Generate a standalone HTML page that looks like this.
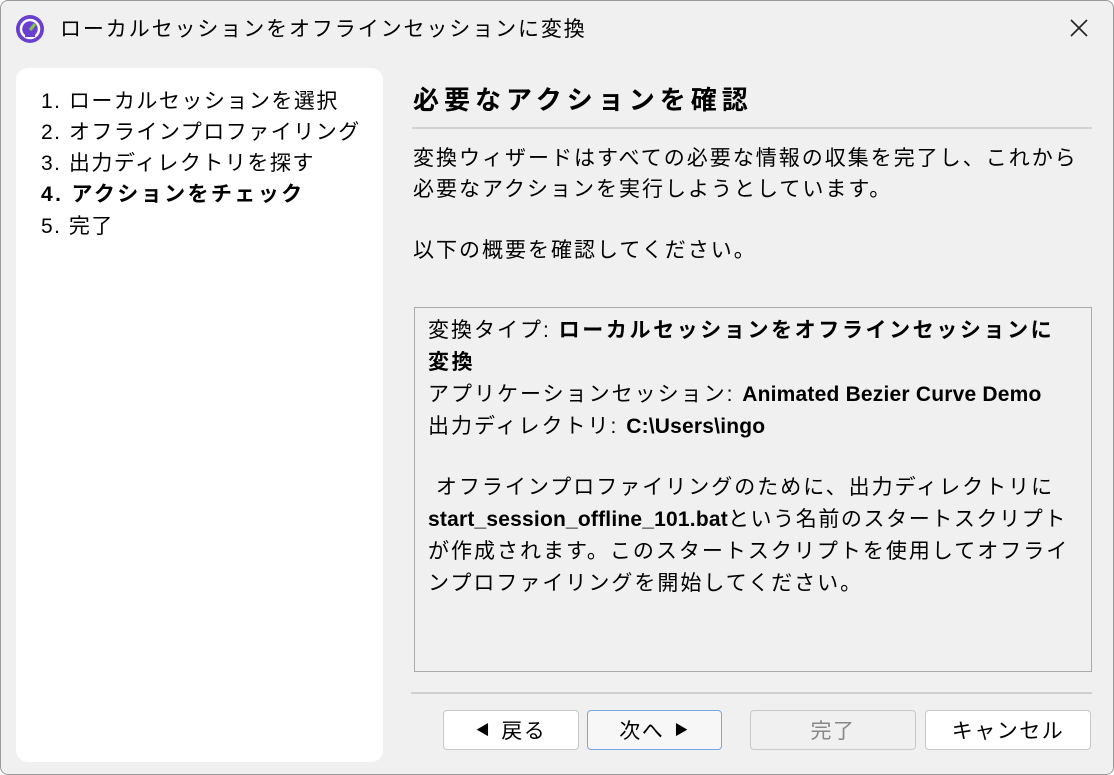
<!DOCTYPE html>
<html><head><meta charset="utf-8"><style>
*{margin:0;padding:0;box-sizing:border-box}
body{width:1114px;height:775px;background:#fff;font-family:"Liberation Sans","Noto Sans CJK JP",sans-serif;color:#000;overflow:hidden}
.win{position:absolute;left:0;top:0;width:1114px;height:775px;background:#f0f0f0;border:1px solid #9a9a9a;border-radius:8px}
.t{position:absolute;white-space:nowrap}
.left{position:absolute;left:15px;top:67px;width:367px;height:694px;background:#fff;border-radius:12px}
.left div{position:absolute;left:25px;font-size:21px;letter-spacing:1.5px;white-space:nowrap}
.hr{position:absolute;height:2px;background:#d0d0d0}
.p{position:absolute;left:412px;font-size:21px;letter-spacing:2px;white-space:nowrap}
.box{position:absolute;left:413px;top:306px;width:678px;height:365px;border:1px solid #aaa;background:#f0f0f0}
.box div{position:absolute;left:13px;font-size:21px;letter-spacing:2px;white-space:nowrap}
.box b{letter-spacing:2.6px}
.box b.l{letter-spacing:0.2px}
.btn{position:absolute;top:709px;height:40px;border:1px solid #c8c8c8;border-radius:4px;background:#fff;font-size:21px;letter-spacing:1.5px;display:flex;align-items:center;justify-content:center;gap:10px}
</style></head><body>
<div class="win">
<svg style="position:absolute;left:14px;top:13px" width="30" height="30" viewBox="0 0 30 30"><circle cx="15" cy="15" r="14" fill="#6a3fd0"/><circle cx="15" cy="15" r="9" fill="none" stroke="#fff" stroke-width="2.5"/><path d="M10 21h10" stroke="#6a3fd0" stroke-width="4"/><path d="M15 16l5-6" stroke="#7ec84a" stroke-width="3"/></svg>
<div class="t" style="left:59px;top:12px;font-size:21px;letter-spacing:1.9px">ローカルセッションをオフラインセッションに変換</div>
<svg style="position:absolute;left:1068px;top:17px" width="20" height="20"><path d="M2 2L18 18M18 2L2 18" stroke="#222" stroke-width="1.6"/></svg>
<div class="left">
<div style="top:17px">1. ローカルセッションを選択</div>
<div style="top:48px">2. オフラインプロファイリング</div>
<div style="top:79px">3. 出力ディレクトリを探す</div>
<div style="top:110px;font-weight:bold;letter-spacing:2.4px">4. アクションをチェック</div>
<div style="top:142px">5. 完了</div>
</div>
<div class="t" style="left:412px;top:79px;font-size:26px;font-weight:bold;letter-spacing:5px">必要なアクションを確認</div>
<div class="hr" style="left:411px;top:126px;width:680px"></div>
<div class="p" style="top:141px">変換ウィザードはすべての必要な情報の収集を完了し、これから</div>
<div class="p" style="top:172px">必要なアクションを実行しようとしています。</div>
<div class="p" style="top:233px">以下の概要を確認してください。</div>
<div class="box">
<div style="top:6px">変換タイプ: <b>ローカルセッションをオフラインセッションに</b></div>
<div style="top:38px"><b>変換</b></div>
<div style="top:70px">アプリケーションセッション: <b class="l">Animated Bezier Curve Demo</b></div>
<div style="top:102px">出力ディレクトリ: <b class="l">C:\Users\ingo</b></div>
<div style="top:163px">&nbsp;オフラインプロファイリングのために、出力ディレクトリに</div>
<div style="top:195px;letter-spacing:1.6px"><b class="l">start_session_offline_101.bat</b>という名前のスタートスクリプト</div>
<div style="top:227px">が作成されます。このスタートスクリプトを使用してオフライ</div>
<div style="top:259px">ンプロファイリングを開始してください。</div>
</div>
<div class="hr" style="left:410px;top:691px;width:681px"></div>
<div class="btn" style="left:442px;width:136px"><span style="font-size:14px">◀</span>戻る</div>
<div class="btn" style="left:586px;width:135px;border-color:#7aa6e0;background:#f7f7f7">次へ<span style="font-size:14px">▶</span></div>
<div class="btn" style="left:749px;width:166px;background:#f0f0f0;color:#888">完了</div>
<div class="btn" style="left:924px;width:166px">キャンセル</div>
</div>
</body></html>
